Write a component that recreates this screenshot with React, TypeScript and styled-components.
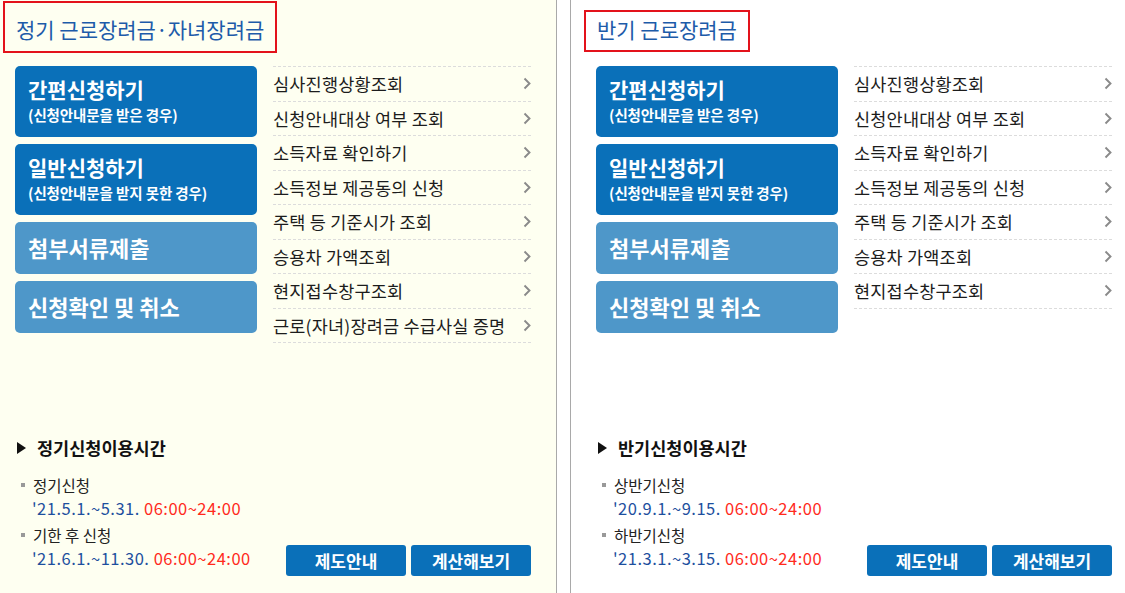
import { createGlobalStyle, styled } from 'styled-components';

const GlobalStyle = createGlobalStyle`
  html, body {
    margin: 0;
    padding: 0;
    background: #ffffff;
  }
  body {
    font-family: "Noto Sans CJK KR", "Noto Sans", sans-serif;
    color: #222;
  }
`;

const Page = styled.div`
  display: flex;
  height: 100vh;
  min-height: 593px;
  background: #fff;
`;

const Panel = styled.section<{ $tone: 'cream' | 'white'; $padLeft: number }>`
  box-sizing: border-box;
  display: flex;
  flex-direction: column;
  height: 100%;
  padding: 0 0 17px ${(p) => p.$padLeft}px;
  background: ${(p) => (p.$tone === 'cream' ? '#fefff1' : '#ffffff')};
  ${(p) => (p.$tone === 'cream' ? 'width: 557px; border-right: 1px solid #a9a9a9;' : 'flex: 1; border-left: 1px solid #a9a9a9;')}
`;

const Gap = styled.div`
  width: 13px;
  flex: none;
`;

const Header = styled.header`
  height: 66px;
  display: flex;
  align-items: flex-start;
`;

const TitleBox = styled.h2<{ $tall?: boolean }>`
  box-sizing: border-box;
  margin: ${(p) => (p.$tall ? '1px' : '10px')} 0 0 -12px;
  height: ${(p) => (p.$tall ? '52px' : '42px')};
  padding: ${(p) => (p.$tall ? '10px' : '1px')} 11px 0;
  border: 2px solid #e3121b;
  font-size: 21px;
  font-weight: 400;
  line-height: 32px;
  color: #1d5ba9;
  white-space: nowrap;
`;

const Body = styled.div`
  display: flex;
  gap: 16px;
`;

const ActionColumn = styled.div`
  display: flex;
  flex-direction: column;
  gap: 7px;
  width: 242px;
`;

const ActionButton = styled.a<{ $light?: boolean; $size: 'large' | 'small' }>`
  box-sizing: border-box;
  display: flex;
  flex-direction: column;
  justify-content: ${(p) => (p.$size === 'large' ? 'flex-start' : 'center')};
  height: ${(p) => (p.$size === 'large' ? '71px' : '52px')};
  padding: ${(p) => (p.$size === 'large' ? '8px 0 0 13px' : '0 0 2px 13px')};
  border-radius: 5px;
  background: ${(p) => (p.$light ? '#4e97c9' : '#0a70b9')};
  color: #fff;
  text-decoration: none;
  cursor: pointer;
`;

const ActionTitle = styled.span<{ $big?: boolean }>`
  font-size: ${(p) => (p.$big ? '22px' : '21px')};
  font-weight: 700;
  line-height: 30px;
`;

const ActionSub = styled.span`
  font-size: 14.5px;
  font-weight: 700;
  line-height: 22px;
  letter-spacing: -0.1px;
`;

const LinkList = styled.ul`
  list-style: none;
  margin: 0;
  padding: 0;
  width: 258px;
  border-top: 1px dashed #dcdcdc;
`;

const LinkRow = styled.li`
  box-sizing: border-box;
  display: flex;
  align-items: center;
  justify-content: space-between;
  height: 34.5px;
  border-bottom: 1px dashed #dcdcdc;
  font-size: 17.5px;
  color: #1c1c1c;
  letter-spacing: 0.2px;
  white-space: nowrap;
`;

const Footer = styled.footer`
  margin-top: auto;
  display: flex;
  align-items: flex-end;
  width: 516px;
`;

const Info = styled.div`
  flex: 1;
  padding: 0 0 6px 2px;
`;

const InfoHeading = styled.h3`
  display: flex;
  align-items: center;
  gap: 11px;
  margin: 0 0 13px;
  font-size: 17.5px;
  font-weight: 700;
  line-height: 26px;
  color: #111;
`;

const Arrow = styled.span`
  width: 0;
  height: 0;
  border-top: 6.5px solid transparent;
  border-bottom: 6.5px solid transparent;
  border-left: 9px solid #111;
`;

const Item = styled.div`
  & + & {
    margin-top: 4px;
  }
`;

const ItemLabel = styled.div`
  display: flex;
  align-items: center;
  gap: 8px;
  padding-left: 4px;
  font-size: 15.5px;
  line-height: 22px;
  color: #222;
  &::before {
    content: '';
    width: 4px;
    height: 4px;
    background: #999;
  }
`;

const DateLine = styled.div`
  padding-left: 15px;
  font-size: 16.5px;
  line-height: 24px;
  color: #1d4f9e;
  letter-spacing: 0.5px;
`;

const Hours = styled.span`
  color: #ff2a1c;
`;

const ButtonRow = styled.div`
  display: flex;
  gap: 5px;
`;

const SmallButton = styled.button`
  width: 120px;
  height: 31px;
  padding: 0;
  border: none;
  border-radius: 3px;
  background: #0a70b9;
  color: #fff;
  font-family: inherit;
  font-size: 17px;
  font-weight: 700;
  cursor: pointer;
`;

const Chevron = () => (
  <svg width="8" height="13" viewBox="0 0 8 13">
    <polyline points="1.5,1.5 6.5,6.5 1.5,11.5" fill="none" stroke="#8a8a8a" strokeWidth="1.9" />
  </svg>
);

type Schedule = { label: string; dates: string };

type PanelData = {
  title: string;
  tall?: boolean;
  tone: 'cream' | 'white';
  padLeft: number;
  links: string[];
  heading: string;
  schedule: Schedule[];
};

const actions = [
  { title: '간편신청하기', sub: '(신청안내문을 받은 경우)', size: 'large' as const },
  { title: '일반신청하기', sub: '(신청안내문을 받지 못한 경우)', size: 'large' as const },
  { title: '첨부서류제출', size: 'small' as const, light: true },
  { title: '신청확인 및 취소', size: 'small' as const, light: true },
];

const commonLinks = [
  '심사진행상황조회',
  '신청안내대상 여부 조회',
  '소득자료 확인하기',
  '소득정보 제공동의 신청',
  '주택 등 기준시가 조회',
  '승용차 가액조회',
  '현지접수창구조회',
];

const panels: PanelData[] = [
  {
    title: '정기 근로장려금·자녀장려금',
    tall: true,
    tone: 'cream',
    padLeft: 15,
    links: [...commonLinks, '근로(자녀)장려금 수급사실 증명'],
    heading: '정기신청이용시간',
    schedule: [
      { label: '정기신청', dates: "'21.5.1.~5.31." },
      { label: '기한 후 신청', dates: "'21.6.1.~11.30." },
    ],
  },
  {
    title: '반기 근로장려금',
    tone: 'white',
    padLeft: 25,
    links: commonLinks,
    heading: '반기신청이용시간',
    schedule: [
      { label: '상반기신청', dates: "'20.9.1.~9.15." },
      { label: '하반기신청', dates: "'21.3.1.~3.15." },
    ],
  },
];

const SectionPanel = ({ data }: { data: PanelData }) => (
  <Panel $tone={data.tone} $padLeft={data.padLeft}>
    <Header>
      <TitleBox $tall={data.tall}>{data.title}</TitleBox>
    </Header>
    <Body>
      <ActionColumn>
        {actions.map((a) => (
          <ActionButton key={a.title} $size={a.size} $light={a.light}>
            <ActionTitle $big={a.size === 'small'}>{a.title}</ActionTitle>
            {a.sub && <ActionSub>{a.sub}</ActionSub>}
          </ActionButton>
        ))}
      </ActionColumn>
      <LinkList>
        {data.links.map((l) => (
          <LinkRow key={l}>
            {l}
            <Chevron />
          </LinkRow>
        ))}
      </LinkList>
    </Body>
    <Footer>
      <Info>
        <InfoHeading>
          <Arrow />
          {data.heading}
        </InfoHeading>
        {data.schedule.map((s) => (
          <Item key={s.label}>
            <ItemLabel>{s.label}</ItemLabel>
            <DateLine>
              {s.dates} <Hours>06:00~24:00</Hours>
            </DateLine>
          </Item>
        ))}
      </Info>
      <ButtonRow>
        <SmallButton>제도안내</SmallButton>
        <SmallButton>계산해보기</SmallButton>
      </ButtonRow>
    </Footer>
  </Panel>
);

const App = () => {
  return (
    <>
      <GlobalStyle />
      <Page>
        <SectionPanel data={panels[0]} />
        <Gap />
        <SectionPanel data={panels[1]} />
      </Page>
    </>
  );
};

export default App;
